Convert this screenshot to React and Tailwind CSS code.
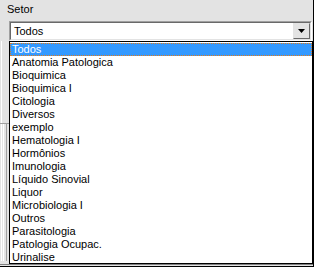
import React from 'react';

const setores = [
  "Todos",
  "Anatomia Patologica",
  "Bioquimica",
  "Bioquimica I",
  "Citologia",
  "Diversos",
  "exemplo",
  "Hematologia I",
  "Hormônios",
  "Imunologia",
  "Líquido Sinovial",
  "Liquor",
  "Microbiologia I",
  "Outros",
  "Parasitologia",
  "Patologia Ocupac.",
  "Urinalise",
];

const App = () => {
  const selected = "Todos";

  return (
    <div
      className="relative w-[314px] h-[267px] flex flex-col overflow-hidden bg-[#e3e3e3] border-r border-b border-black text-[11px] leading-[13px] text-black"
      style={{ fontFamily: '"Liberation Sans", Arial, sans-serif' }}
    >
      {/* rotulo */}
      <div className="pl-[7px] pt-[3px] h-[21px] shrink-0">Setor</div>

      {/* combo fechado */}
      <div className="ml-[9px] mr-[1px] h-[20px] shrink-0 border border-t-[#a0a0a0] border-l-[#a0a0a0] border-r-white border-b-white">
        <div className="h-full flex border border-t-[#696969] border-l-[#696969] border-r-[#e3e3e3] border-b-[#e3e3e3] bg-white">
          <div className="flex-1 pl-[3px] pt-[2px]">Todos</div>
          <div className="w-[17px] h-full flex items-center justify-center bg-[#e3e3e3] border border-t-[#e3e3e3] border-l-[#e3e3e3] border-r-[#696969] border-b-[#696969]">
            <svg width="7" height="4" viewBox="0 0 7 4">
              <path d="M0 0h7L3.5 4z" fill="#000" />
            </svg>
          </div>
        </div>
      </div>

      {/* controles por tras da lista */}
      <div className="flex-1 flex flex-col border-b border-[#808080] mb-px">
        <div className="h-[82px] ml-px border-l border-white" />
        <div className="flex-1 flex border-t border-[#a0a0a0] pl-px mb-[3px]">
          <div className="w-[2px] border-l border-white" />
          <div className="w-[3px] border-l border-white" />
          <div className="w-[3px] border-l border-[#a0a0a0]" />
        </div>
      </div>

      {/* lista aberta */}
      <div className="absolute left-[9px] right-0 top-[41px] bottom-[2px] bg-white border border-black">
        <ul className="pt-px">
          {setores.map((s) => (
            <li
              key={s}
              className={
                s === selected
                  ? "h-[13px] pl-[2px] bg-[#3399ff] text-white outline-1 outline-dotted outline-[#e07b1c] -outline-offset-1"
                  : "h-[13px] pl-[2px]"
              }
            >
              {s}
            </li>
          ))}
        </ul>
      </div>
    </div>
  );
};

export default App;
